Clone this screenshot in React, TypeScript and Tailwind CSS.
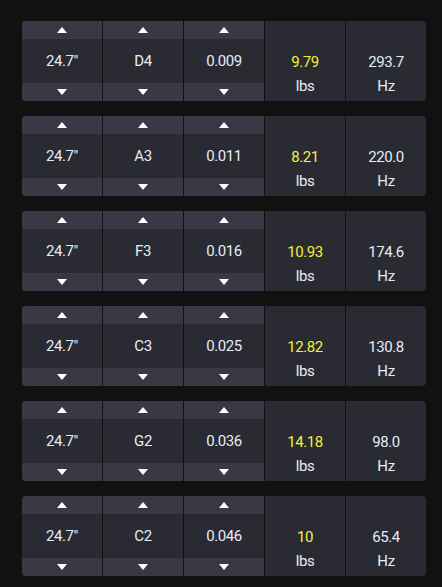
import React from 'react';

type Row = { length: string; note: string; gauge: string; tension: string; freq: string };

const rows: Row[] = [
  { length: '24.7"', note: 'D4', gauge: '0.009', tension: '9.79', freq: '293.7' },
  { length: '24.7"', note: 'A3', gauge: '0.011', tension: '8.21', freq: '220.0' },
  { length: '24.7"', note: 'F3', gauge: '0.016', tension: '10.93', freq: '174.6' },
  { length: '24.7"', note: 'C3', gauge: '0.025', tension: '12.82', freq: '130.8' },
  { length: '24.7"', note: 'G2', gauge: '0.036', tension: '14.18', freq: '98.0' },
  { length: '24.7"', note: 'C2', gauge: '0.046', tension: '10', freq: '65.4' },
];

const Arrow: React.FC<{ down?: boolean }> = ({ down }) => (
  <svg width="10" height="6" viewBox="0 0 10 6" className="block">
    {down ? <polygon points="0,0 10,0 5,6" fill="#ffffff" /> : <polygon points="0,6 10,6 5,0" fill="#ffffff" />}
  </svg>
);

const Spinner: React.FC<{ value: string }> = ({ value }) => (
  <div className="flex flex-col bg-[#2a2a33]">
    <button className="flex h-[18px] items-center justify-center bg-[#393945]">
      <Arrow />
    </button>
    <div className="flex flex-1 items-center justify-center text-[15px] text-[#e6ecf5]">{value}</div>
    <button className="flex h-[18px] items-center justify-center bg-[#393945]">
      <Arrow down />
    </button>
  </div>
);

const Readout: React.FC<{ value: string; unit: string; highlight?: boolean }> = ({ value, unit, highlight }) => (
  <div className="flex flex-col items-center bg-[#2a2a33] pt-[32px] text-[15px] leading-[18px]">
    <span className={highlight ? 'text-[#f2f23c]' : 'text-[#e6ecf5]'}>{value}</span>
    <span className="mt-[6px] text-[#e6ecf5]">{unit}</span>
  </div>
);

export default function App() {
  return (
    <div className="min-h-[587px] bg-[#111111] px-[22px] pt-[21px] pb-[11px] tracking-[-0.4px]" style={{ fontFamily: 'Roboto, "Liberation Sans", sans-serif' }}>
      <div className="flex w-[404px] flex-col gap-[15px]">
        {rows.map((r, i) => (
          <div key={i} className="grid h-[80px] grid-cols-5 gap-px overflow-hidden rounded-[4px] bg-[#111111]">
            <Spinner value={r.length} />
            <Spinner value={r.note} />
            <Spinner value={r.gauge} />
            <Readout value={r.tension} unit="lbs" highlight />
            <Readout value={r.freq} unit="Hz" />
          </div>
        ))}
      </div>
    </div>
  );
}
